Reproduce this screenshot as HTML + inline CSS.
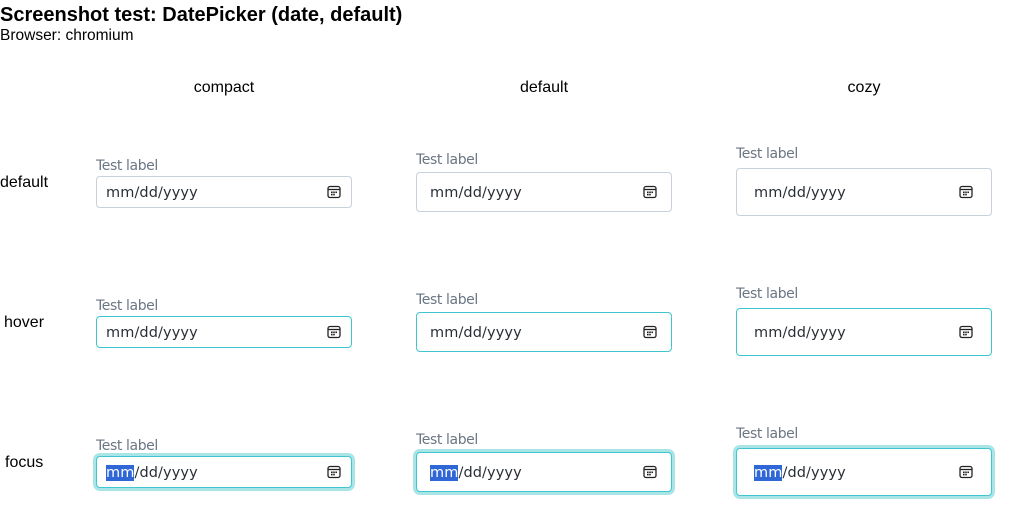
<!DOCTYPE html>
<html><head><meta charset="utf-8"><style>
body{margin:0;width:1009px;height:516px;background:#fff;font-family:"Liberation Sans",sans-serif;color:#000;position:relative;overflow:hidden}
.a{position:absolute;white-space:nowrap}
h1{position:absolute;left:0;top:3px;margin:0;font-size:20px;font-weight:bold;line-height:24px}
.sub{left:0;top:27px;font-size:15.5px}
.col{font-size:16px;top:79px;transform:translateX(-50%)}
.row{font-size:16px}
.lbl{font-family:"DejaVu Sans",sans-serif;font-size:14px;color:#6b7684;letter-spacing:-0.4px}
.box{position:absolute;width:254px;border:1px solid #c7d0db;border-radius:4px;background:#fff;box-sizing:content-box}
.box.h{border-color:#3fc6cf}
.box.f{border-color:#3fc6cf;box-shadow:0 0 0 3px #a9e5e7}
.txt{position:absolute;top:50%;transform:translateY(-45%);font-family:"DejaVu Sans",sans-serif;font-size:14.5px;letter-spacing:0.1px;color:#2a2f36;line-height:20px}
.sel{background:#3067d6;color:#fff}
.ic{position:absolute;top:50%;transform:translateY(-50%);width:14px;height:14px}
</style></head><body>
<h1>Screenshot test: DatePicker (date, default)</h1>
<div class="a sub">Browser: chromium</div>
<div class="a col" style="left:224px">compact</div>
<div class="a col" style="left:544px">default</div>
<div class="a col" style="left:864px">cozy</div>
<div class="a row" style="left:0;top:174px">default</div>
<div class="a row" style="left:4px;top:314px">hover</div>
<div class="a row" style="left:5px;top:454px">focus</div>

<!-- compact -->
<div class="a lbl" style="left:96px;top:158px">Test label</div>
<div class="box" style="left:96px;top:176px;height:30px"><span class="txt" style="left:9px">mm/dd/yyyy</span><svg class="ic" style="right:10px" viewBox="0 0 14 14"><rect x="1" y="1.5" width="12" height="11" rx="2" fill="none" stroke="#222" stroke-width="1.3"/><line x1="1" y1="4.5" x2="13" y2="4.5" stroke="#222" stroke-width="1.3"/><g fill="#222"><rect x="4" y="6.5" width="1.6" height="1.6"/><rect x="6.2" y="6.5" width="1.6" height="1.6"/><rect x="8.4" y="6.5" width="1.6" height="1.6"/><rect x="4" y="8.8" width="1.6" height="1.6"/><rect x="6.2" y="8.8" width="1.6" height="1.6"/></g></svg></div>
<div class="a lbl" style="left:96px;top:298px">Test label</div>
<div class="box h" style="left:96px;top:316px;height:30px"><span class="txt" style="left:9px">mm/dd/yyyy</span><svg class="ic" style="right:10px" viewBox="0 0 14 14"><rect x="1" y="1.5" width="12" height="11" rx="2" fill="none" stroke="#222" stroke-width="1.3"/><line x1="1" y1="4.5" x2="13" y2="4.5" stroke="#222" stroke-width="1.3"/><g fill="#222"><rect x="4" y="6.5" width="1.6" height="1.6"/><rect x="6.2" y="6.5" width="1.6" height="1.6"/><rect x="8.4" y="6.5" width="1.6" height="1.6"/><rect x="4" y="8.8" width="1.6" height="1.6"/><rect x="6.2" y="8.8" width="1.6" height="1.6"/></g></svg></div>
<div class="a lbl" style="left:96px;top:438px">Test label</div>
<div class="box f" style="left:96px;top:456px;height:30px"><span class="txt" style="left:9px"><span class="sel">mm</span>/dd/yyyy</span><svg class="ic" style="right:10px" viewBox="0 0 14 14"><rect x="1" y="1.5" width="12" height="11" rx="2" fill="none" stroke="#222" stroke-width="1.3"/><line x1="1" y1="4.5" x2="13" y2="4.5" stroke="#222" stroke-width="1.3"/><g fill="#222"><rect x="4" y="6.5" width="1.6" height="1.6"/><rect x="6.2" y="6.5" width="1.6" height="1.6"/><rect x="8.4" y="6.5" width="1.6" height="1.6"/><rect x="4" y="8.8" width="1.6" height="1.6"/><rect x="6.2" y="8.8" width="1.6" height="1.6"/></g></svg></div>

<!-- default -->
<div class="a lbl" style="left:416px;top:152px">Test label</div>
<div class="box" style="left:416px;top:172px;height:38px"><span class="txt" style="left:13px">mm/dd/yyyy</span><svg class="ic" style="right:14px" viewBox="0 0 14 14"><rect x="1" y="1.5" width="12" height="11" rx="2" fill="none" stroke="#222" stroke-width="1.3"/><line x1="1" y1="4.5" x2="13" y2="4.5" stroke="#222" stroke-width="1.3"/><g fill="#222"><rect x="4" y="6.5" width="1.6" height="1.6"/><rect x="6.2" y="6.5" width="1.6" height="1.6"/><rect x="8.4" y="6.5" width="1.6" height="1.6"/><rect x="4" y="8.8" width="1.6" height="1.6"/><rect x="6.2" y="8.8" width="1.6" height="1.6"/></g></svg></div>
<div class="a lbl" style="left:416px;top:292px">Test label</div>
<div class="box h" style="left:416px;top:312px;height:38px"><span class="txt" style="left:13px">mm/dd/yyyy</span><svg class="ic" style="right:14px" viewBox="0 0 14 14"><rect x="1" y="1.5" width="12" height="11" rx="2" fill="none" stroke="#222" stroke-width="1.3"/><line x1="1" y1="4.5" x2="13" y2="4.5" stroke="#222" stroke-width="1.3"/><g fill="#222"><rect x="4" y="6.5" width="1.6" height="1.6"/><rect x="6.2" y="6.5" width="1.6" height="1.6"/><rect x="8.4" y="6.5" width="1.6" height="1.6"/><rect x="4" y="8.8" width="1.6" height="1.6"/><rect x="6.2" y="8.8" width="1.6" height="1.6"/></g></svg></div>
<div class="a lbl" style="left:416px;top:432px">Test label</div>
<div class="box f" style="left:416px;top:452px;height:38px"><span class="txt" style="left:13px"><span class="sel">mm</span>/dd/yyyy</span><svg class="ic" style="right:14px" viewBox="0 0 14 14"><rect x="1" y="1.5" width="12" height="11" rx="2" fill="none" stroke="#222" stroke-width="1.3"/><line x1="1" y1="4.5" x2="13" y2="4.5" stroke="#222" stroke-width="1.3"/><g fill="#222"><rect x="4" y="6.5" width="1.6" height="1.6"/><rect x="6.2" y="6.5" width="1.6" height="1.6"/><rect x="8.4" y="6.5" width="1.6" height="1.6"/><rect x="4" y="8.8" width="1.6" height="1.6"/><rect x="6.2" y="8.8" width="1.6" height="1.6"/></g></svg></div>

<!-- cozy -->
<div class="a lbl" style="left:736px;top:146px">Test label</div>
<div class="box" style="left:736px;top:168px;height:46px"><span class="txt" style="left:17px">mm/dd/yyyy</span><svg class="ic" style="right:18px" viewBox="0 0 14 14"><rect x="1" y="1.5" width="12" height="11" rx="2" fill="none" stroke="#222" stroke-width="1.3"/><line x1="1" y1="4.5" x2="13" y2="4.5" stroke="#222" stroke-width="1.3"/><g fill="#222"><rect x="4" y="6.5" width="1.6" height="1.6"/><rect x="6.2" y="6.5" width="1.6" height="1.6"/><rect x="8.4" y="6.5" width="1.6" height="1.6"/><rect x="4" y="8.8" width="1.6" height="1.6"/><rect x="6.2" y="8.8" width="1.6" height="1.6"/></g></svg></div>
<div class="a lbl" style="left:736px;top:286px">Test label</div>
<div class="box h" style="left:736px;top:308px;height:46px"><span class="txt" style="left:17px">mm/dd/yyyy</span><svg class="ic" style="right:18px" viewBox="0 0 14 14"><rect x="1" y="1.5" width="12" height="11" rx="2" fill="none" stroke="#222" stroke-width="1.3"/><line x1="1" y1="4.5" x2="13" y2="4.5" stroke="#222" stroke-width="1.3"/><g fill="#222"><rect x="4" y="6.5" width="1.6" height="1.6"/><rect x="6.2" y="6.5" width="1.6" height="1.6"/><rect x="8.4" y="6.5" width="1.6" height="1.6"/><rect x="4" y="8.8" width="1.6" height="1.6"/><rect x="6.2" y="8.8" width="1.6" height="1.6"/></g></svg></div>
<div class="a lbl" style="left:736px;top:426px">Test label</div>
<div class="box f" style="left:736px;top:448px;height:46px"><span class="txt" style="left:17px"><span class="sel">mm</span>/dd/yyyy</span><svg class="ic" style="right:18px" viewBox="0 0 14 14"><rect x="1" y="1.5" width="12" height="11" rx="2" fill="none" stroke="#222" stroke-width="1.3"/><line x1="1" y1="4.5" x2="13" y2="4.5" stroke="#222" stroke-width="1.3"/><g fill="#222"><rect x="4" y="6.5" width="1.6" height="1.6"/><rect x="6.2" y="6.5" width="1.6" height="1.6"/><rect x="8.4" y="6.5" width="1.6" height="1.6"/><rect x="4" y="8.8" width="1.6" height="1.6"/><rect x="6.2" y="8.8" width="1.6" height="1.6"/></g></svg></div>
</body></html>
